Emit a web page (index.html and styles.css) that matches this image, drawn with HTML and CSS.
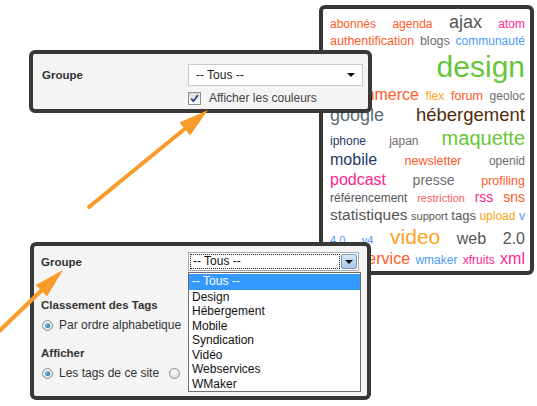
FILE: index.html
```html
<!DOCTYPE html>
<html lang="fr">
<head>
<meta charset="utf-8">
<title>Nuage de tags</title>
<link rel="stylesheet" href="styles.css">
</head>
<body>
<div class="canvas">
  <div class="cloud">
    <div class="row"><a class="f12 c-or">abonnés</a><a class="f12 c-or">agenda</a><a class="f18 c-gy">ajax</a><a class="f12 c-pk">atom</a></div>
    <div class="row"><a class="f125 c-or">authentification</a><a class="f125 c-lg">blogs</a><a class="f12 c-lb">communauté</a></div>
    <div class="row end"><a class="f30 c-gr">design</a></div>
    <div class="row"><a class="f16 c-or">e-commerce</a><a class="f12 c-og">flex</a><a class="f125 c-or">forum</a><a class="f12 c-lg">geoloc</a></div>
    <div class="row"><a class="f18 c-gb">google</a><a class="f185 c-br">hébergement</a></div>
    <div class="row"><a class="f12 c-nv">iphone</a><a class="f12 c-lg">japan</a><a class="f20 c-gr">maquette</a></div>
    <div class="row"><a class="f16 c-nv">mobile</a><a class="f125 c-or">newsletter</a><a class="f12 c-lg">openid</a></div>
    <div class="row"><a class="f16 c-pk">podcast</a><a class="f14 c-lg">presse</a><a class="f125 c-or">profiling</a></div>
    <div class="row"><a class="f12 c-gy">référencement</a><a class="f11 c-sa">restriction</a><a class="f14 c-pk">rss</a><a class="f14 c-or">sns</a></div>
    <div class="row"><a class="f155 c-gy">statistiques</a><a class="f11 c-gy">support</a><a class="f13 c-gy">tags</a><a class="f12 c-og">upload</a><a class="f12 c-lb">v</a></div>
    <div class="row"><a class="f11 c-lb">4.0</a><a class="f11 c-lb">v4</a><a class="f21 c-og">video</a><a class="f16 c-gy">web</a><a class="f16 c-gy">2.0</a></div>
    <div class="row"><a class="f16 c-or">webservice</a><a class="f12 c-lb">wmaker</a><a class="f12 c-pk">xfruits</a><a class="f16 c-pk">xml</a></div>
  </div>

  <div class="panel panel-top">
    <div class="label label-top">Groupe</div>
    <div class="controls">
      <div class="select"><span>-- Tous --</span><span class="caret"></span></div>
      <div class="check">
        <span class="checkbox"><svg width="11" height="11" viewBox="0 0 11 11"><path d="M2.2 5.6 L4.4 8.2 L8.8 2.2" fill="none" stroke="#2b3f7c" stroke-width="1.7"/></svg></span>
        <span>Afficher les couleurs</span>
      </div>
    </div>
  </div>

  <div class="panel panel-bottom">
    <div class="g-row">
      <div class="label label-bottom">Groupe</div>
      <div class="dropdown">
        <div class="combo">
          <span class="combo-text">-- Tous --</span>
          <span class="combo-btn"><span class="caret"></span></span>
        </div>
        <ul class="list">
          <li class="on">-- Tous --</li>
          <li>Design</li>
          <li>Hébergement</li>
          <li>Mobile</li>
          <li>Syndication</li>
          <li>Vidéo</li>
          <li>Webservices</li>
          <li>WMaker</li>
        </ul>
      </div>
    </div>
    <div class="label section">Classement des Tags</div>
    <div class="radio-row"><span class="radio checked"></span><span>Par ordre alphabetique</span></div>
    <div class="label section second">Afficher</div>
    <div class="radio-row"><span class="radio checked"></span><span>Les tags de ce site</span><span class="radio extra"></span></div>
  </div>

  <svg class="arrows" width="537" height="406" viewBox="0 0 537 406">
    <line x1="89" y1="207" x2="187" y2="127" stroke="#f89b2a" stroke-width="4" stroke-linecap="round"/>
    <polygon points="208,110 190,135.5 179.5,122.5" fill="#f89b2a"/>
    <line x1="-10" y1="340" x2="44" y2="288" stroke="#f89b2a" stroke-width="4"/>
    <polygon points="63,270 47,296.5 35.8,284.9" fill="#f89b2a"/>
  </svg>
</div>
</body>
</html>
```

FILE: styles.css
```css
* { box-sizing: border-box; margin: 0; padding: 0; }
html, body { width: 537px; height: 406px; overflow: hidden; background: #fff; }
body { font-family: "Liberation Sans", Arial, sans-serif; color: #333; }

.canvas { position: relative; width: 537px; height: 406px; }

/* tag cloud */
.cloud {
  position: absolute; left: 319px; top: 5px; width: 215px; height: 270px;
  border: 4px solid #363636; border-radius: 6px; background: #fff;
  padding: 3px 5px 0 7px; overflow: hidden;
}
.row { display: flex; justify-content: space-between; align-items: baseline; line-height: 1.2; white-space: nowrap; }
.row.end { justify-content: flex-end; }
.row a { text-decoration: none; }

.f11 { font-size: 11px; }
.f12 { font-size: 12px; }
.f125 { font-size: 12.5px; }
.f13 { font-size: 13px; }
.f14 { font-size: 14px; }
.f155 { font-size: 15.5px; }
.f16 { font-size: 16px; }
.f18 { font-size: 18px; }
.f185 { font-size: 18.5px; }
.f20 { font-size: 20px; }
.f21 { font-size: 21px; }
.f30 { font-size: 30px; }

.c-or { color: #ff5a1f; }
.c-pk { color: #ff1f8f; }
.c-gr { color: #66c636; }
.c-gy { color: #555; }
.c-lg { color: #6e6e6e; }
.c-lb { color: #4a9cf6; }
.c-og { color: #ffa21c; }
.c-nv { color: #1e3a66; }
.c-br { color: #4f2c0c; }
.c-gb { color: #5c6a78; }
.c-sa { color: #ff5d5d; }

/* panels */
.panel {
  position: absolute; border: 4px solid #383838; border-radius: 6px;
  background: #f4f4f4; font-size: 12px; color: #333;
}
.label { font-weight: bold; font-size: 11.5px; color: #333; }

.panel-top { left: 29px; top: 50px; width: 343px; height: 63px; display: flex; padding: 10px 0 0 9px; }
.label-top { width: 146px; line-height: 22px; }
.controls { display: flex; flex-direction: column; }
.select {
  width: 175px; height: 22px; background: #fff; border: 1px solid #c9c9c9;
  display: flex; align-items: center; justify-content: space-between;
  padding: 0 7px; font-size: 12px; color: #222;
}
.caret { width: 0; height: 0; border-left: 4px solid transparent; border-right: 4px solid transparent; border-top: 4px solid #111; }
.check { display: flex; align-items: center; gap: 8px; margin-top: 5px; color: #444; font-size: 12px; line-height: 14px; }
.checkbox {
  width: 13px; height: 13px; border: 1px solid #8e8f8f;
  background: linear-gradient(#dadada, #fff); display: flex; align-items: center; justify-content: center;
}

.panel-bottom { left: 30px; top: 242px; width: 341px; height: 158px; padding: 6px 7px; }
.g-row { display: flex; align-items: center; }
.label-bottom { width: 147px; line-height: 14px; }
.dropdown { position: relative; width: 171px; }
.combo { height: 19px; border: 1px solid #a9afb6; background: #fff; display: flex; padding: 1px; }
.combo-text { flex: 1; border: 1px dotted #222; font-size: 12px; line-height: 13px; padding-left: 2px; color: #111; }
.combo-btn {
  width: 16px; margin-left: 1px; border: 1px solid #7f9db9; border-radius: 2px;
  background: linear-gradient(#d7e6f9, #a9c4ec); display: flex; align-items: center; justify-content: center;
}
.list {
  position: absolute; top: 100%; left: 0; width: 173px; margin-top: 1px; padding-top: 1px;
  border: 1px solid #6f6f6f; background: #fff; list-style: none; z-index: 2;
}
.list li { font-size: 12px; line-height: 14.5px; padding-left: 3px; color: #111; }
.list li.on { background: #3399ff; color: #fff; line-height: 15.5px; }

.section { line-height: 14px; margin-top: 27px; }
.section.second { margin-top: 13px; }
.radio-row { display: flex; align-items: center; gap: 6px; line-height: 16px; margin-top: 5px; font-size: 12px; color: #333; padding-left: 1px; }
.radio {
  width: 11px; height: 11px; border-radius: 50%; border: 1px solid #8c8c8c;
  background: radial-gradient(circle at 40% 35%, #fff, #d4d4d4);
  display: flex; align-items: center; justify-content: center;
}
.radio.checked::after {
  content: ""; width: 5px; height: 5px; border-radius: 50%;
  background: radial-gradient(circle at 35% 35%, #7cc6f2, #0d5d98);
}
.radio.extra { margin-left: 4px; }

.arrows { position: absolute; left: 0; top: 0; pointer-events: none; z-index: 5; }
```
